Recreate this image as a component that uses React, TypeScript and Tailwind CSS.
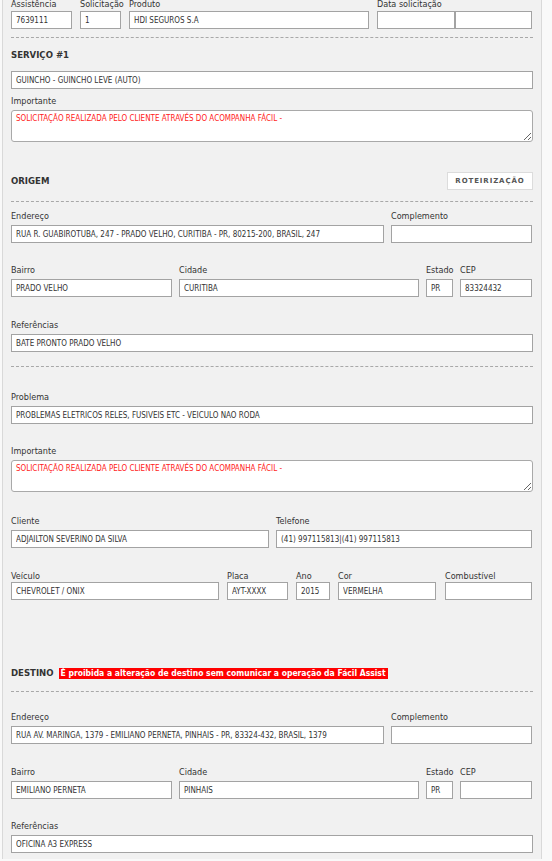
import React from "react";

const inputCls =
    "block h-[18px] w-full border border-[#a3a3a3] bg-white px-[4px] text-[8px] text-[#333] outline-none font-['DejaVu_Sans_Condensed','DejaVu_Sans',sans-serif]";

interface FieldProps {
    label: string;
    value?: string;
    className?: string;
    tight?: boolean;
}

function Field({ label, value = "", className = "", tight }: FieldProps) {
    return (
        <div className={className}>
            <div className={`h-[12px] whitespace-nowrap text-[9px] leading-[12px] text-[#333] ${tight ? "" : "mb-[3px]"}`}>{label}</div>
            <input readOnly value={value} className={inputCls} />
        </div>
    );
}

function Notes({ text }: { text: string }) {
    return (
        <textarea
            readOnly
            value={text}
            className="block h-[32px] w-full rounded-[3px] border border-[#a9a9a9] bg-white px-[4px] pt-[3px] text-[8px] leading-[10px] text-[#ff1a1a] outline-none font-['DejaVu_Sans_Condensed','DejaVu_Sans',sans-serif]"
        />
    );
}

function Dashed({ className = "" }: { className?: string }) {
    return <div className={`border-t border-dashed border-[#a8a8a8] ${className}`} />;
}

const aviso = "SOLICITAÇÃO REALIZADA PELO CLIENTE ATRAVÉS DO ACOMPANHA FÁCIL -";

export default function App() {
    return (
        <div className="min-h-[861px] w-[552px] overflow-hidden bg-[#f9f9f9] font-['DejaVu_Sans_Condensed','DejaVu_Sans',sans-serif]">
            <div className="ml-[2px] h-[861px] w-[540px] border-x border-[#d9d9d9] bg-[#f1f1f1] pl-[8px] pr-[8px]">
                {/* cabeçalho */}
                <div className="mt-[-2px] flex">
                    <div className="w-[61px]">
                        <div className="mb-[1px] h-[12px] text-[9px] leading-[12px] text-[#333]">Assistência</div>
                        <input readOnly value="7639111" className={inputCls} />
                    </div>
                    <div className="ml-[8px] w-[41px]">
                        <div className="mb-[1px] h-[12px] text-[9px] leading-[12px] text-[#333]">Solicitação</div>
                        <input readOnly value="1" className={inputCls} />
                    </div>
                    <div className="ml-[8px] w-[240px]">
                        <div className="mb-[1px] h-[12px] text-[9px] leading-[12px] text-[#333]">Produto</div>
                        <input readOnly value="HDI SEGUROS S.A" className={inputCls} />
                    </div>
                    <div className="ml-[8px] w-[155px]">
                        <div className="mb-[1px] h-[12px] text-[9px] leading-[12px] text-[#333]">Data solicitação</div>
                        <div className="flex">
                            <input readOnly value="" className={`${inputCls} !w-[78px]`} />
                            <input readOnly value="" className={`${inputCls} flex-1`} />
                        </div>
                    </div>
                </div>

                <Dashed className="mt-[8px]" />

                {/* serviço */}
                <div className="mt-[10px] h-[13px] text-[9.5px] font-bold leading-[13px] text-[#333]">SERVIÇO #1</div>
                <input readOnly value="GUINCHO - GUINCHO LEVE (AUTO)" className={`${inputCls} mt-[10px]`} />
                <div className="mt-[6px] mb-[3px] h-[12px] text-[9px] leading-[12px] text-[#333]">Importante</div>
                <Notes text={aviso} />

                {/* origem */}
                <div className="mt-[30px] flex h-[18px] items-center justify-between">
                    <span className="text-[9.5px] font-bold text-[#333]">ORIGEM</span>
                    <button className="h-[18px] w-[86px] border border-[#dcdcdc] bg-white text-[7px] font-bold tracking-[0.9px] text-[#555] font-['DejaVu_Sans',sans-serif]">
                        ROTEIRIZAÇÃO
                    </button>
                </div>
                <Dashed className="mt-[11px]" />

                <div className="mt-[8px] flex">
                    <Field className="w-[373px]" label="Endereço" value="RUA R. GUABIROTUBA, 247 - PRADO VELHO, CURITIBA - PR, 80215-200, BRASIL, 247" />
                    <Field className="ml-[7px] w-[141px]" label="Complemento" />
                </div>
                <div className="mt-[21px] flex">
                    <Field className="w-[161px]" label="Bairro" value="PRADO VELHO" />
                    <Field className="ml-[7px] w-[240px]" label="Cidade" value="CURITIBA" />
                    <Field className="ml-[7px] w-[27px]" label="Estado" value="PR" />
                    <Field className="ml-[7px] w-[72px]" label="CEP" value="83324432" />
                </div>
                <Field className="mt-[22px]" label="Referências" value="BATE PRONTO PRADO VELHO" />

                <Dashed className="mt-[14px]" />

                <Field className="mt-[24px]" label="Problema" value="PROBLEMAS ELÉTRICOS RELES, FUSÍVEIS ETC - VEICULO NAO RODA" />
                <div className="mt-[21px] mb-[3px] h-[12px] text-[9px] leading-[12px] text-[#333]">Importante</div>
                <Notes text={aviso} />

                <div className="mt-[23px] flex">
                    <Field className="w-[258px]" label="Cliente" value="ADJAILTON SEVERINO DA SILVA" />
                    <Field className="ml-[7px] w-[256px]" label="Telefone" value="(41) 997115813|(41) 997115813" />
                </div>
                <div className="mt-[22px] flex">
                    <Field tight className="w-[208px]" label="Veículo" value="CHEVROLET / ONIX" />
                    <Field tight className="ml-[8px] w-[61px]" label="Placa" value="AYT-XXXX" />
                    <Field tight className="ml-[8px] w-[34px]" label="Ano" value="2015" />
                    <Field tight className="ml-[8px] w-[98px]" label="Cor" value="VERMELHA" />
                    <Field tight className="ml-[9px] w-[87px]" label="Combustível" />
                </div>

                {/* destino */}
                <div className="mt-[67px] flex h-[13px] items-center">
                    <span className="text-[9.5px] font-bold text-[#333]">DESTINO</span>
                    <span className="ml-[5px] bg-[#ff0000] px-[2px] text-[8.5px] font-bold leading-[11px] text-white">
                        É proibida a alteração de destino sem comunicar a operação da Fácil Assist
                    </span>
                </div>
                <Dashed className="mt-[11px]" />

                <div className="mt-[19px] flex">
                    <Field className="w-[373px]" label="Endereço" value="RUA AV. MARINGÁ, 1379 - EMILIANO PERNETA, PINHAIS - PR, 83324-432, BRASIL, 1379" />
                    <Field className="ml-[7px] w-[141px]" label="Complemento" />
                </div>
                <div className="mt-[22px] flex">
                    <Field className="w-[161px]" label="Bairro" value="EMILIANO PERNETA" />
                    <Field className="ml-[7px] w-[240px]" label="Cidade" value="PINHAIS" />
                    <Field className="ml-[7px] w-[27px]" label="Estado" value="PR" />
                    <Field className="ml-[7px] w-[72px]" label="CEP" />
                </div>
                <Field className="mt-[21px]" label="Referências" value="OFICINA A3 EXPRESS" />
            </div>
        </div>
    );
}
